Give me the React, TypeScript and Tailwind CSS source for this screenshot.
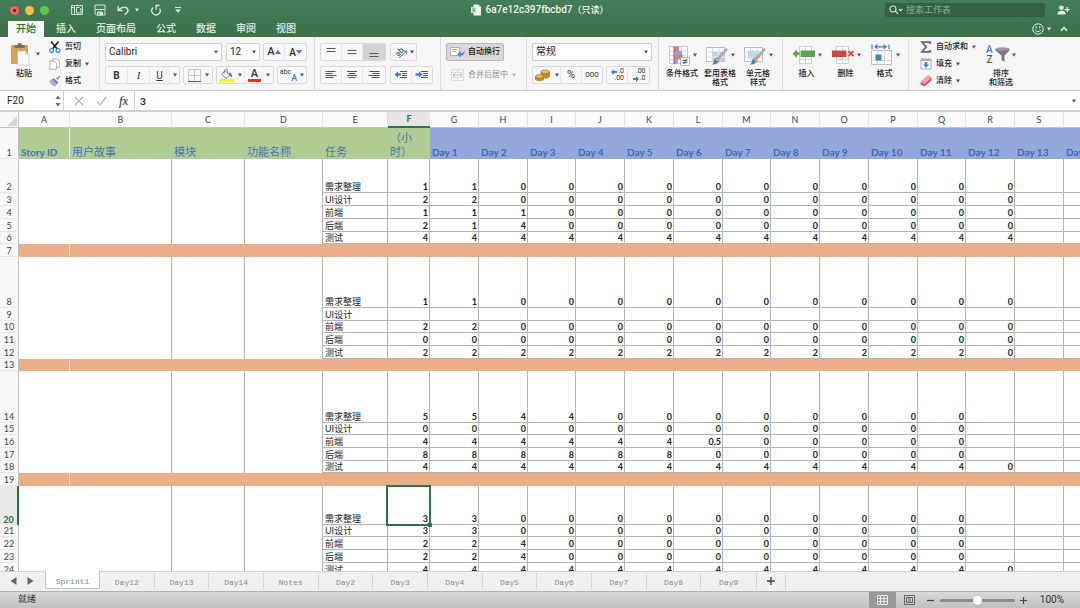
import React from 'react';

const LETTERS = ['A', 'B', 'C', 'D', 'E', 'F', 'G', 'H', 'I', 'J', 'K', 'L', 'M', 'N', 'O', 'P', 'Q', 'R', 'S', 'T'];
const COL_WIDTHS = [51, 102, 73, 78, 65, 42, 49, 49, 48, 49, 49, 49, 48, 49, 49, 49, 48, 49, 49, 49];

const zeros = (n: number) => Array<string>(n).fill('0');
const rep = (v: string, n: number) => Array<string>(n).fill(v);

type Row = { n: number; h: string; band?: boolean; task?: string; values?: string[] };

const ROWS: Row[] = [
  { n: 2, h: 'h-[34px]', task: '需求整理', values: ['1', '1', ...zeros(11)] },
  { n: 3, h: 'h-[13px]', task: 'UI设计', values: ['2', '2', ...zeros(11)] },
  { n: 4, h: 'h-[13px]', task: '前端', values: ['1', '1', '1', ...zeros(10)] },
  { n: 5, h: 'h-[13px]', task: '后端', values: ['2', '1', '4', ...zeros(10)] },
  { n: 6, h: 'h-[12px]', task: '测试', values: rep('4', 13) },
  { n: 7, h: 'h-[13px]', band: true },
  { n: 8, h: 'h-[51px]', task: '需求整理', values: ['1', '1', ...zeros(11)] },
  { n: 9, h: 'h-[13px]', task: 'UI设计', values: [] },
  { n: 10, h: 'h-[12px]', task: '前端', values: ['2', '2', ...zeros(11)] },
  { n: 11, h: 'h-[13px]', task: '后端', values: zeros(13) },
  { n: 12, h: 'h-[13px]', task: '测试', values: [...rep('2', 12), '0'] },
  { n: 13, h: 'h-[12px]', band: true },
  { n: 14, h: 'h-[52px]', task: '需求整理', values: ['5', '5', '4', '4', ...zeros(8)] },
  { n: 15, h: 'h-[12px]', task: 'UI设计', values: zeros(12) },
  { n: 16, h: 'h-[13px]', task: '前端', values: [...rep('4', 6), '0.5', ...zeros(5)] },
  { n: 17, h: 'h-[13px]', task: '后端', values: [...rep('8', 6), ...zeros(6)] },
  { n: 18, h: 'h-[12px]', task: '测试', values: [...rep('4', 12), '0'] },
  { n: 19, h: 'h-[13px]', band: true },
  { n: 20, h: 'h-[39px]', task: '需求整理', values: ['3', '3', ...zeros(10)] },
  { n: 21, h: 'h-[12px]', task: 'UI设计', values: ['3', '3', ...zeros(10)] },
  { n: 22, h: 'h-[13px]', task: '前端', values: ['2', '2', '4', ...zeros(9)] },
  { n: 23, h: 'h-[13px]', task: '后端', values: ['2', '2', '4', ...zeros(9)] },
  { n: 24, h: 'h-[13px]', task: '测试', values: [...rep('4', 12), '0'] },
];

const SHEETS = ['Day12', 'Day13', 'Day14', 'Notes', 'Day2', 'Day3', 'Day4', 'Day5', 'Day6', 'Day7', 'Day8', 'Day9'];

function Caret({ className = 'text-[#555]' }: { className?: string }) {
  return (
    <svg viewBox="0 0 4 4" className={`h-1 w-1 shrink-0 ${className}`} aria-hidden="true">
      <path d="M0 .5h4L2 3.7z" fill="currentColor" />
    </svg>
  );
}

function IconButton({ label, className = '', children }: { label: string; className?: string; children: React.ReactNode }) {
  return (
    <button type="button" aria-label={label} className={`flex h-full items-center justify-center ${className}`}>
      {children}
    </button>
  );
}

function Box({ children }: { children: React.ReactNode }) {
  return (
    <div className="flex h-[18px] items-stretch divide-x divide-[#e6e6e6] overflow-hidden rounded-[2px] border border-[#d9d9d9] bg-[#f8f8f8]">
      {children}
    </div>
  );
}

function Select({ label, value, className }: { label: string; value: string; className: string }) {
  return (
    <div className={`relative h-[18px] ${className}`}>
      <select
        aria-label={label}
        defaultValue={value}
        className="block h-full w-full appearance-none rounded-[2px] border border-[#cfcfcf] bg-white pl-[3px] text-[10px] leading-4 text-[#222]"
      >
        <option>{value}</option>
      </select>
      <span className="pointer-events-none absolute inset-y-0 right-1 flex items-center">
        <Caret />
      </span>
    </div>
  );
}

function Group({ className, children }: { className: string; children: React.ReactNode }) {
  return <div className={`flex shrink-0 flex-col gap-[5px] border-r border-[#dedede] pt-[6px] ${className}`}>{children}</div>;
}

function SmallAction({ icon, text, caret }: { icon: React.ReactNode; text: string; caret?: boolean }) {
  return (
    <button type="button" className="flex h-[17px] items-center gap-1 whitespace-nowrap text-[8px] font-medium text-[#222]">
      {icon}
      <span>{text}</span>
      {caret && <Caret />}
    </button>
  );
}

function BigAction({ icon, lines, className }: { icon: React.ReactNode; lines: string[]; className: string }) {
  return (
    <button type="button" className={`flex flex-col items-center text-[8px] leading-[9px] font-medium text-[#222] ${className}`}>
      <span className="flex h-6 items-center gap-[2px]">
        {icon}
        <Caret />
      </span>
      <span className="mt-[2px] flex flex-col whitespace-nowrap">
        {lines.map((l) => (
          <span key={l}>{l}</span>
        ))}
      </span>
    </button>
  );
}

function Lines({ d, className = 'text-[#555]' }: { d: string; className?: string }) {
  return (
    <svg viewBox="0 0 12 10" className={`h-[10px] w-3 ${className}`} aria-hidden="true">
      <path d={d} stroke="currentColor" strokeWidth="1" fill="none" />
    </svg>
  );
}

function Indent({ flip }: { flip?: boolean }) {
  return (
    <svg viewBox="0 0 14 10" className="h-[10px] w-[14px]" aria-hidden="true">
      <path d="M6 1.5h7M8 3.5h5M8 5.5h5M6 7.5h7" stroke="#555" fill="none" />
      <path d={flip ? 'M7.5 4.5L4 1.2v2H.5v2.6H4v2z' : 'M.5 4.5L4 1.2v2h3v2.6H4v2z'} fill="#3b7fd4" />
    </svg>
  );
}

function Brush() {
  return (
    <g>
      <path d="M22.5 5.5l-7 8.5-2-1.6 7-7.4q1.6-1 2 .5z" fill="#aeb2b8" stroke="#83878e" strokeWidth=".5" />
      <path d="M13.5 12.4l2 1.6-1.3 2-2.6-2z" fill="#d8a248" />
      <path d="M11.8 13.8l2.6 2.3q-.6 4.6-7.9 4.4 2.6-1.1 2.4-3.4.4-2.8 2.9-3.3z" fill="#3f7ecb" />
      <path d="M11.8 13.8l2.6 2.3-1.200 2.200-3.600-3.200z" fill="#e0aa55" />
    </g>
  );
}

function GridBase({ children, wide }: { children: React.ReactNode; wide?: boolean }) {
  return (
    <svg viewBox="0 0 24 22" className="h-[22px] w-6 shrink-0" aria-hidden="true">
      {wide && (
        <>
          <path d="M1.500 3.500h18v14h-18z" fill="#fff" stroke="#b9bec4" />
          <path d="M1.500 8h18M1.500 13h18M7.500 3.500v14M14 3.500v14" stroke="#ccd0d5" strokeWidth=".8" />
        </>
      )}
      {children}
    </svg>
  );
}

function TitleBar() {
  return (
    <header className="shrink-0 bg-linear-to-b from-[#447d57] to-[#3c7149] text-white">
      <div className="flex h-5 items-center">
        <div className="flex flex-1 items-center pl-[10px]">
          <div className="flex gap-[6px]">
            <button type="button" aria-label="关闭" className="flex size-[9px] items-center justify-center rounded-full bg-[#ed6a5e]">
              <span className="size-[3px] rounded-full bg-[#6f1410]" />
            </button>
            <button type="button" aria-label="最小化" className="size-[9px] rounded-full bg-[#f5bf4f]" />
            <button type="button" aria-label="缩放" className="size-[9px] rounded-full bg-[#61c554]" />
          </div>
          <div className="ml-[22px] flex items-center gap-[11px] text-[#d8e6dc]">
            <IconButton label="新建">
              <svg viewBox="0 0 12 12" className="size-3" fill="none" stroke="currentColor">
                <path d="M.6 1.500h10.800v9H.6zM3.500 1.500v9M.6 3.500h3" />
                <path d="M5.500 3.500h3l1.500 1.500v4h-4.500z" />
              </svg>
            </IconButton>
            <IconButton label="保存">
              <svg viewBox="0 0 12 12" className="size-3" fill="none" stroke="currentColor">
                <path d="M1 1h10v10H2.200L1 9.800z" />
                <path d="M1.500 5.500h9" />
                <path d="M3.500 8h5v3h-5z" fill="currentColor" />
                <path d="M5 9v2" stroke="#437a55" />
              </svg>
            </IconButton>
            <div className="flex items-center gap-[6px]">
              <IconButton label="撤消">
                <svg viewBox="0 0 12 12" className="size-3" fill="none" stroke="currentColor" strokeWidth="1.400">
                  <path d="M1.200 2.200v4.300h4.300M1.500 6.200Q4.500 2.800 8 3.200q3 .5 3 3.200 0 1.800-3.500 4.400" />
                </svg>
              </IconButton>
              <Caret className="text-[#d8e6dc]" />
            </div>
            <IconButton label="恢复">
              <svg viewBox="0 0 12 12" className="size-3" fill="none" stroke="currentColor" strokeWidth="1.300">
                <path d="M3.200 3.500A4.200 4.200 0 1 0 9.600 4.500M5.500 1.500h4M6.200 1.500v4" />
              </svg>
            </IconButton>
            <IconButton label="自定义快速访问工具栏">
              <svg viewBox="0 0 10 10" className="size-[10px]" fill="currentColor">
                <path d="M2 2h6v1H2zM2 4.500h6L5 7.800z" />
              </svg>
            </IconButton>
          </div>
        </div>
        <h1 className="flex items-center gap-1 text-[10px] font-medium whitespace-nowrap text-[#eef5f0]">
          <svg viewBox="0 0 10 12" className="h-3 w-[10px]" aria-hidden="true">
            <path d="M2.500.5h5L10 3v8.500H2.500z" fill="#f3f7f4" />
            <path d="M7.500.5V3H10z" fill="#b6cdbd" />
            <path d="M0 3h5.500v6H0z" fill="#d4e4d9" />
            <path d="M1.500 4.300l2.500 3.400M4 4.300L1.500 7.700" stroke="#3f7a53" strokeWidth=".9" />
          </svg>
          <span>
            6a7e12c397fbcbd7<span className="text-[9px]">（只读）</span>
          </span>
        </h1>
        <div className="flex flex-1 items-center justify-end gap-3 pr-[10px]">
          <label className="flex h-[14px] w-40 items-center gap-[3px] rounded-[2px] bg-[#336142] pl-1">
            <svg viewBox="0 0 14 10" className="h-[10px] w-[14px] shrink-0" fill="none" stroke="#d5e3d9" strokeWidth="1.100" aria-hidden="true">
              <circle cx="4" cy="4" r="3" />
              <path d="M6.200 6.200L9 9M10 4l1.700 1.700L13.400 4" />
            </svg>
            <input aria-label="搜索工作表" placeholder="搜索工作表" className="w-full min-w-0 bg-transparent text-[9px] leading-3 outline-none placeholder:text-[#8fae99]" />
          </label>
          <IconButton label="共享">
            <svg viewBox="0 0 13 10" className="h-[10px] w-[13px]" fill="#e3eee6">
              <circle cx="4.500" cy="2.800" r="2.300" />
              <path d="M.3 9.500Q.3 5.700 4.500 5.700T8.700 9.500zM9.600 2h1.200v2h2v1.200h-2v2H9.600v-2h-2V4h2z" />
            </svg>
          </IconButton>
        </div>
      </div>
      <div className="flex h-[17px] items-end justify-between pr-3">
        <nav className="flex h-4 gap-1 pl-2 text-[10px] font-medium">
          <button type="button" className="bg-[#f6f6f6] px-2 leading-4 text-[#2f6b42]">开始</button>
          {['插入', '页面布局', '公式', '数据', '审阅', '视图'].map((t) => (
            <button key={t} type="button" className="px-2 leading-4 text-[#e3eee6]">
              {t}
            </button>
          ))}
        </nav>
        <div className="flex h-[17px] items-center gap-[3px] text-[#e3eee6]">
          <IconButton label="反馈">
            <svg viewBox="0 0 12 12" className="size-3" fill="none" stroke="currentColor">
              <circle cx="6" cy="6" r="5.200" />
              <path d="M3.200 7q2.800 3.600 5.600 0" />
              <path d="M4.300 3.600v1.600M7.700 3.600v1.600" strokeWidth="1.200" />
            </svg>
          </IconButton>
          <Caret className="text-[#e3eee6]" />
          <IconButton label="折叠功能区" className="ml-[6px]">
            <svg viewBox="0 0 8 6" className="h-[6px] w-2" fill="none" stroke="currentColor" strokeWidth="1.500">
              <path d="M1 4.600l3-3 3 3" />
            </svg>
          </IconButton>
        </div>
      </div>
    </header>
  );
}

function Ribbon() {
  return (
    <div className="flex h-[54px] shrink-0 overflow-hidden border-b border-[#c9c9c9] bg-[#f6f6f6] text-[#333]">
      <div className="flex w-[100px] shrink-0 border-r border-[#dedede] pl-[10px]">
        <button type="button" className="flex w-[33px] flex-col items-start pt-[5px] text-[8px] leading-3 font-medium text-[#222]">
          <span className="flex items-center gap-[6px]">
            <svg viewBox="0 0 20 24" className="h-6 w-5 shrink-0" aria-hidden="true">
              <rect x="1" y="3" width="17" height="19" rx="1.500" fill="#d9a05a" />
              <path d="M4.500 6V3.200h2.800a2.300 2.300 0 0 1 4.600 0h2.800V6z" fill="#6d6f73" />
              <path d="M7.500 9h7.500l4 4v10H7.500z" fill="#fff" stroke="#b5b5b5" strokeWidth=".6" />
              <path d="M15 9v4h4z" fill="#dcdcdc" />
            </svg>
            <Caret />
          </span>
          <span className="mt-[2px] ml-[6px]">粘贴</span>
        </button>
        <div className="ml-[6px] flex flex-col pt-[1px]">
          <SmallAction
            text="剪切"
            icon={
              <svg viewBox="0 0 12 12" className="size-3" fill="none" aria-hidden="true">
                <path d="M2 .5L8.300 8M9.500.5L3.500 8" stroke="#222" strokeWidth="1.600" />
                <circle cx="2.600" cy="9.400" r="1.900" stroke="#3b7fd4" strokeWidth="1.200" />
                <circle cx="9" cy="9.400" r="1.900" stroke="#3b7fd4" strokeWidth="1.200" />
              </svg>
            }
          />
          <SmallAction
            text="复制"
            caret
            icon={
              <svg viewBox="0 0 12 12" className="size-3" aria-hidden="true">
                <path d="M3.500.8h4.300l2.700 2.700v5.700h-7z" fill="#fff" stroke="#a5a5a5" strokeWidth=".8" />
                <path d="M.8 3h4.300l2.400 2.500v5.700H.8z" fill="#fff" stroke="#a5a5a5" strokeWidth=".8" />
              </svg>
            }
          />
          <SmallAction
            text="格式"
            icon={
              <svg viewBox="0 0 12 12" className="size-3" aria-hidden="true">
                <path d="M11.500 1.200L8.600 5 7 3.600 10.600.5z" fill="#8b9099" />
                <path d="M4.500 3l5 4.200-2 2L3 4.600z" fill="#6b8fc0" />
                <path d="M3 4.600l4.500 4.600-1.900 2Q2.500 10 .5 6.500z" fill="#a9b2be" stroke="#7f8792" strokeWidth=".5" />
              </svg>
            }
          />
        </div>
      </div>

      <Group className="w-[215px] pl-[5px]">
        <div className="flex">
          <Select label="字体" value="Calibri" className="w-[117px]" />
          <Select label="字号" value="12" className="ml-1 w-[34px]" />
          <div className="ml-[3px]">
            <Box>
              <IconButton label="增大字号" className="w-[21px] text-[11px] font-medium">
                A<svg viewBox="0 0 6 4" className="h-1 w-[6px]"><path d="M0 4h6L3 0z" fill="#4a74c4" /></svg>
              </IconButton>
              <IconButton label="减小字号" className="w-[21px] text-[10px] font-medium">
                A<svg viewBox="0 0 6 4" className="h-1 w-[6px]"><path d="M0 0h6L3 4z" fill="#4a74c4" /></svg>
              </IconButton>
            </Box>
          </div>
        </div>
        <div className="flex gap-[3px]">
          <Box>
            <IconButton label="加粗" className="w-[22px] text-[10px] font-bold">B</IconButton>
            <IconButton label="倾斜" className="w-[22px] font-['Liberation_Serif'] text-[11px] italic">I</IconButton>
            <IconButton label="下划线" className="w-[20px] text-[10px] underline">U</IconButton>
            <IconButton label="下划线选项" className="w-[9px]"><Caret /></IconButton>
          </Box>
          <Box>
            <IconButton label="边框" className="w-[28px] gap-1">
              <svg viewBox="0 0 13 13" className="size-[13px]" fill="none" aria-hidden="true">
                <path d="M.5.500h12v12M.5.500v12M6.500.500v12M.5 6.500h12" stroke="#c8c8c8" />
                <path d="M0 12.500h13" stroke="#555" />
              </svg>
              <Caret />
            </IconButton>
          </Box>
          <Box>
            <IconButton label="填充颜色" className="w-[28px] gap-1">
              <svg viewBox="0 0 15 15" className="size-[15px]" aria-hidden="true">
                <path d="M6 2.500l5 4.500-4 3.500-4-4z" fill="#f2f5f9" stroke="#666" strokeWidth=".8" />
                <path d="M5 5.500Q5 .8 7 .8t1.500 4.500" fill="none" stroke="#777" strokeWidth=".8" />
                <path d="M10 4.500q3.500.5 3 5-1.500-1-3-3z" fill="#3b7fd4" />
                <path d="M0 11h15v3.500H0z" fill="#f8f23c" />
              </svg>
              <Caret />
            </IconButton>
            <IconButton label="字体颜色" className="w-[28px] gap-[5px]">
              <span className="flex flex-col items-center text-[11px] leading-[11px] font-medium">
                A
                <span className="h-[3px] w-[13px] bg-[#e0302a]" />
              </span>
              <Caret />
            </IconButton>
          </Box>
          <Box>
            <IconButton label="拼音指南" className="w-[28px] gap-[3px]">
              <span className="flex h-[15px] items-end">
                <span className="self-start text-[7px] leading-[8px]">abc</span>
                <span className="text-[9px] leading-[9px] font-medium text-[#3b7fd4]">A</span>
              </span>
              <Caret />
            </IconButton>
          </Box>
        </div>
      </Group>

      <Group className="w-[126px] pl-[5px]">
        <div className="flex gap-1">
          <Box>
            <IconButton label="顶端对齐" className="w-[21px]"><Lines d="M1.500 1.500h9M1.500 4.500h9" /></IconButton>
            <IconButton label="垂直居中" className="w-[21px]"><Lines d="M1.500 3.500h9M1.500 6.500h9" /></IconButton>
            <IconButton label="底端对齐" className="w-[22px] bg-[#d3d3d3]"><Lines d="M1.500 6.500h9M1.500 9.500h9" /></IconButton>
          </Box>
          <Box>
            <IconButton label="方向" className="w-[25px] gap-[2px]">
              <svg viewBox="0 0 14 14" className="size-[14px]" aria-hidden="true">
                <text x="1" y="10" fontSize="8" transform="rotate(-45 5 7)" fill="#333">ab</text>
                <path d="M5 13l7.500-7M9.500 6h3.200v3.200" stroke="#3b7fd4" fill="none" />
              </svg>
              <Caret />
            </IconButton>
          </Box>
        </div>
        <div className="flex gap-1">
          <Box>
            <IconButton label="左对齐" className="w-[21px]"><Lines d="M.5 1.500h10M.5 3.500h7M.5 5.500h11M.5 7.500h8" /></IconButton>
            <IconButton label="居中" className="w-[21px]"><Lines d="M1 1.500h10M2.500 3.500h7M1 5.500h10M2.500 7.500h7" /></IconButton>
            <IconButton label="右对齐" className="w-[22px]"><Lines d="M1.500 1.500h10M4.500 3.500h7M.5 5.500h11M3.500 7.500h8" /></IconButton>
          </Box>
          <Box>
            <IconButton label="减少缩进" className="w-[21px]"><Indent /></IconButton>
            <IconButton label="增加缩进" className="w-[20px]"><Indent flip /></IconButton>
          </Box>
        </div>
      </Group>

      <Group className="w-[86px] items-start pl-[5px]">
        <button type="button" className="flex h-[18px] w-[58px] items-center gap-[3px] rounded-[2px] border border-[#b9b9b9] bg-[#d9d9d9] pl-[3px] text-[8px] font-medium whitespace-nowrap text-[#111]">
          <svg viewBox="0 0 15 12" className="h-3 w-[15px] shrink-0" aria-hidden="true">
            <path d="M.5 1.500h9v8h-9z" fill="#fff" stroke="#999" strokeWidth=".7" />
            <path d="M2 3.500h5M2 5.500h4" stroke="#c9a063" />
            <path d="M14 2.500q.8 5-3.200 5V5.200L7.200 8.400l3.600 3.200V9.500Q16 9 14 2.500z" fill="#4a83d8" />
          </svg>
          自动换行
        </button>
        <button type="button" disabled className="flex h-[18px] items-center gap-[4px] pl-[5px] text-[8px] whitespace-nowrap text-[#8f8f8f]">
          <svg viewBox="0 0 13 12" className="h-3 w-[13px] shrink-0" fill="none" stroke="#c5c9d0" aria-hidden="true">
            <path d="M.5.500h12v11H.5zM.5 3.500h12M.5 8.500h12M6.500.500v3M6.500 8.500v3" strokeWidth=".8" strokeDasharray="2 1" />
            <path d="M2 6h9M3.500 4.700L2 6l1.500 1.300M9.500 4.700L11 6 9.500 7.300" stroke="#aab9d4" />
          </svg>
          合并后居中
          <Caret className="text-[#b5b5b5]" />
        </button>
      </Group>

      <Group className="w-[132px] pl-[5px]">
        <Select label="数字格式" value="常规" className="w-[120px]" />
        <div className="flex gap-[3px]">
          <Box>
            <IconButton label="货币" className="w-[28px] gap-[5px]">
              <svg viewBox="0 0 15 13" className="h-[13px] w-[15px]" fill="#d9a13a" stroke="#94671c" strokeWidth=".6" aria-hidden="true">
                <path d="M6 3v5q4.500 2.500 8.500 0V3z" />
                <path d="M6 4.800q4.300 2 8.500 0M6 6.500q4.300 2 8.500 0" fill="none" />
                <ellipse cx="10.200" cy="2.800" rx="4.300" ry="1.900" fill="#efc060" />
                <path d="M.5 7.500v3.300q4 2.300 8 0V7.500z" />
                <path d="M.5 9.200q4 2 8 0" fill="none" />
                <ellipse cx="4.500" cy="7.300" rx="4" ry="1.700" fill="#efc060" />
              </svg>
              <Caret />
            </IconButton>
            <IconButton label="百分比" className="w-[21px] text-[11px]">%</IconButton>
            <IconButton label="千位分隔" className="w-[20px] text-[8px]">000</IconButton>
          </Box>
          <Box>
            {['增加小数位数', '减少小数位数'].map((l, i) => (
              <IconButton key={l} label={l} className="w-[21px]">
                <span className="flex w-[14px] flex-col items-end text-[7px] leading-[7px]">
                  <span className="flex items-center gap-[1px]">
                    {i === 0 && <svg viewBox="0 0 6 6" className="size-[6px]"><path d="M0 3l3-3v2h3v2H3v2z" fill="#3b7fd4" /></svg>}
                    {i === 0 ? '.0' : '.00'}
                  </span>
                  <span className="flex items-center gap-[1px]">
                    {i === 1 && <svg viewBox="0 0 6 6" className="size-[6px]"><path d="M6 3L3 0v2H0v2h3v2z" fill="#3b7fd4" /></svg>}
                    {i === 0 ? '.00' : '.0'}
                  </span>
                </span>
              </IconButton>
            ))}
          </Box>
        </div>
      </Group>

      <div className="flex w-[124px] shrink-0 items-start border-r border-[#dedede] pt-[6px] pl-1">
        <BigAction
          className="w-[38px]"
          lines={['条件格式']}
          icon={
            <GridBase>
              <path d="M2.500 2.500h18v17h-18z" fill="#fff" stroke="#b9bec4" strokeWidth=".8" />
              <path d="M2.500 7h18M2.500 11.500h18M2.500 15.500h18M7.500 2.500v17M14.500 2.500v17" stroke="#ccd0d5" strokeWidth=".8" />
              <path d="M7 2.500h5V7H7zM7 11h9v4H7z" fill="#df7b7b" />
              <path d="M7 7h8v4H7zM7 15h4v4.500H7z" fill="#82a9dc" />
              <path d="M7 2v18" stroke="#c24f58" />
              <path d="M13.500 13.500h9v8h-9z" fill="#fff" stroke="#a5a5a5" strokeWidth=".8" />
              <path d="M15.500 16.400h5M15.500 18.600h5M19.500 15l-3 5" stroke="#222" strokeWidth=".8" />
            </GridBase>
          }
        />
        <BigAction
          className="w-[38px]"
          lines={['套用表格', '格式']}
          icon={
            <GridBase wide>
              <path d="M7.500 8h12v9.500h-12z" fill="#b9d3f2" />
              <path d="M7.500 13h12M14 8v9" stroke="#fff" strokeWidth=".8" />
              <Brush />
            </GridBase>
          }
        />
        <BigAction
          className="w-[38px]"
          lines={['单元格', '样式']}
          icon={
            <GridBase wide>
              <path d="M5 6.500h11.500v8H5z" fill="#bcd6f4" />
              <Brush />
            </GridBase>
          }
        />
      </div>

      <div className="flex w-[126px] shrink-0 items-start border-r border-[#dedede] pt-[6px] pl-1">
        <BigAction
          className="w-[39px]"
          lines={['插入']}
          icon={
            <GridBase>
              <path d="M7.500 2.500h12v17h-12zM7.500 15.500h12M13.500 2.500v17" fill="#fff" stroke="#c3c6ca" strokeWidth=".8" />
              <path d="M8.500 6.500H23v6.500H8.500z" fill="#5fa352" />
              <path d="M.5 9.800l4.500-4.200v2.700h2.500v3H5V14z" fill="#5fa352" />
            </GridBase>
          }
        />
        <BigAction
          className="w-[39px]"
          lines={['删除']}
          icon={
            <GridBase>
              <path d="M5.500 2.500h12v17h-12zM5.500 15.500h12M11.500 2.500v17" fill="#fff" stroke="#c3c6ca" strokeWidth=".8" />
              <path d="M1 6.500h14.500V13H1z" fill="#cc4b47" />
              <path d="M17.500 7.200l5 5M22.500 7.200l-5 5" stroke="#cc4b47" strokeWidth="1.900" />
            </GridBase>
          }
        />
        <BigAction
          className="w-[39px]"
          lines={['格式']}
          icon={
            <GridBase>
              <path d="M1.500 6.500h20v14h-20z" fill="#fff" stroke="#b9bec4" />
              <path d="M1.500 16.500h20M7.500 6.500v14M14.500 6.500v14" stroke="#ccd0d5" strokeWidth=".8" />
              <path d="M5.500 10.500h6v6h-6z" fill="#3f7fc9" />
              <path d="M2 .5v4.500M19 .5v4.500M4.500 2.800h12M7.500.8l-2.500 2 2.500 2M13.500.8l2.500 2-2.500 2" fill="none" stroke="#3f7fc9" strokeWidth="1.200" />
            </GridBase>
          }
        />
      </div>

      <div className="flex shrink-0 pl-[11px]">
        <div className="flex flex-col pt-[1px]">
          <SmallAction
            text="自动求和"
            caret
            icon={
              <svg viewBox="0 0 12 12" className="size-3" fill="none" stroke="#666" strokeWidth="1.700" aria-hidden="true">
                <path d="M10.200 3V1.200H2l4.200 4.700L2 10.800h8.200V9" />
              </svg>
            }
          />
          <SmallAction
            text="填充"
            caret
            icon={
              <svg viewBox="0 0 12 12" className="size-3" aria-hidden="true">
                <path d="M1 1h10v10H1z" fill="#fff" stroke="#9eabbb" />
                <path d="M1 1h10v2H1z" fill="#9eabbb" />
                <path d="M4.800 4h2.400v2.500h2L6 9.800 2.800 6.500h2z" fill="#3b7fd4" />
              </svg>
            }
          />
          <SmallAction
            text="清除"
            caret
            icon={
              <svg viewBox="0 0 12 12" className="size-3" aria-hidden="true">
                <path d="M8 .5L11.500 2.500V5.500L4.500 11.500.5 9.500V7z" fill="#c95a70" />
                <path d="M8 .5L11.500 2.500 4.500 9 .5 7z" fill="#f0a2ae" />
              </svg>
            }
          />
        </div>
        <BigAction
          className="ml-[6px] w-[38px] pt-[6px]"
          lines={['排序', '和筛选']}
          icon={
            <svg viewBox="0 0 24 22" className="h-[22px] w-6 shrink-0" aria-hidden="true">
              <text x="0" y="9" fontSize="10" fill="#3b7fd4" fontWeight="500">A</text>
              <text x="0.500" y="19" fontSize="10" fill="#555" fontWeight="500">Z</text>
              <path d="M9.500 5h14v1.500l-5 5v6.500l-3-2v-4.500l-6-5z" fill="#77797c" />
              <ellipse cx="16.500" cy="5" rx="7" ry="1.700" fill="#97999c" />
            </svg>
          }
        />
      </div>
    </div>
  );
}

function FormulaBar() {
  return (
    <div className="flex h-[19px] shrink-0 items-center bg-white text-[#222]">
      <input aria-label="名称框" defaultValue="F20" className="w-[53px] pl-[7px] text-[10px] leading-4 outline-none" />
      <button type="button" aria-label="名称列表" className="flex h-full w-[11px] items-center justify-center border-r border-[#d0d0d0]">
        <svg viewBox="0 0 6 12" className="h-3 w-[6px]" fill="#666" aria-hidden="true">
          <path d="M.5 4h5L3 .5zM.5 8h5L3 11.500z" />
        </svg>
      </button>
      <div className="flex h-full w-[71px] items-center gap-3 border-r border-[#d0d0d0] pl-[10px]">
        <IconButton label="取消">
          <svg viewBox="0 0 10 10" className="size-[10px]" fill="none" stroke="#b5b5b5" strokeWidth="1.300"><path d="M1 1l8 8M9 1L1 9" /></svg>
        </IconButton>
        <IconButton label="输入">
          <svg viewBox="0 0 11 10" className="h-[10px] w-[11px]" fill="none" stroke="#b5b5b5" strokeWidth="1.300"><path d="M.8 5.500L4 8.700 10.200 1" /></svg>
        </IconButton>
        <IconButton label="插入函数" className="font-['Liberation_Serif'] text-[13px] leading-4 italic">fx</IconButton>
      </div>
      <input aria-label="编辑栏" defaultValue="3" className="min-w-0 flex-1 pl-[5px] font-['Lato'] text-[10px] leading-4 font-bold outline-none" />
      <IconButton label="展开编辑栏" className="w-3">
        <Caret />
      </IconButton>
    </div>
  );
}

function HeaderCell({ i }: { i: number }) {
  const blue = i > 5;
  let content: React.ReactNode = null;
  if (i === 0) content = <span className="font-bold">Story ID</span>;
  else if (i === 1) content = '用户故事';
  else if (i === 2) content = '模块';
  else if (i === 3) content = '功能名称';
  else if (i === 4) content = '任务';
  else if (i === 5)
    content = (
      <>
        <span className="block">（小</span>
        <span className="block">时）</span>
      </>
    );
  else content = <span className="font-bold">{`Day ${i - 5}`}</span>;
  const cjk = i > 0 && i < 6;
  return (
    <td
      className={`h-[31px] overflow-hidden p-0 pl-[2px] align-bottom whitespace-nowrap leading-[14px] ${cjk ? 'text-[11px]' : 'text-[10px]'} ${
        blue ? 'bg-[#92a8d8] text-[#3f68b8]' : 'bg-[#b0cc95] text-[#4b74b0]'
      } ${i === 0 ? 'border-r border-[#e4eedb]' : ''}`}
    >
      {content}
    </td>
  );
}

function Grid() {
  const total = 19 + COL_WIDTHS.reduce((a, b) => a + b, 0);
  return (
    <main className="min-h-0 flex-1 overflow-hidden bg-white">
      <table className="table-fixed border-separate border-spacing-0 font-['Lato','Noto_Sans_CJK_SC',sans-serif] text-[9px] leading-[10px]" style={{ width: total }}>
        <colgroup>
          <col style={{ width: 19 }} />
          {COL_WIDTHS.map((w, i) => (
            <col key={LETTERS[i]} style={{ width: w }} />
          ))}
        </colgroup>
        <thead>
          <tr>
            <th className="h-4 border-r border-b border-[#c4c4c4] bg-[#f8f8f8] p-0 align-bottom">
              <svg viewBox="0 0 11 11" className="ml-auto h-[11px] w-[11px]" aria-hidden="true">
                <path d="M10 0v10H0z" fill="#d6d6d6" />
              </svg>
            </th>
            {LETTERS.map((l) => (
              <th
                key={l}
                scope="col"
                className={`h-4 p-0 ${
                  l === 'F'
                    ? 'border-b-2 border-[#2f7047] bg-[#e6e6e6] font-bold text-[#2f7047]'
                    : 'border-r border-b border-r-[#e3e3e3] border-b-[#c4c4c4] bg-[#f9f9f9] font-normal text-[#444]'
                }`}
              >
                {l}
              </th>
            ))}
          </tr>
        </thead>
        <tbody>
          <tr>
            <th scope="row" className="border-r border-b border-r-[#bdbdbd] border-b-[#e6e6e6] bg-[#f8f8f8] p-0 align-bottom font-normal text-[#444]">
              1
            </th>
            {LETTERS.map((l, i) => (
              <HeaderCell key={l} i={i} />
            ))}
          </tr>
          {ROWS.map((r) => (
            <tr key={r.n}>
              <th
                scope="row"
                className={`${r.h} p-0 align-bottom ${
                  r.n === 20
                    ? 'border-r-2 border-[#2f7047] bg-[#e9e9e9] font-bold text-[#2f7047]'
                    : 'border-r border-b border-r-[#bdbdbd] border-b-[#e6e6e6] bg-[#f8f8f8] font-normal text-[#444]'
                }`}
              >
                {r.n}
              </th>
              {LETTERS.map((l, i) => {
                if (r.band) return <td key={l} className={`bg-[#e9af88] p-0 ${i === 0 ? 'border-r border-[#f6dccb]' : ''}`} />;
                if (i === 0) return <td key={l} className="p-0" />;
                if (i < 4) return <td key={l} className={`p-0 ${i === 1 || i === 2 || i === 3 ? 'border-r border-[#b4b4b4]' : ''}`} />;
                if (i === 4)
                  return (
                    <td key={l} className="border-r border-b border-[#b4b4b4] p-0 pl-[2px] align-bottom whitespace-nowrap text-[#222]">
                      {r.task}
                    </td>
                  );
                const selected = r.n === 20 && l === 'F';
                return (
                  <td key={l} className={`border-r border-b border-[#b4b4b4] p-0 pr-px text-right align-bottom font-bold text-[#222] ${selected ? 'relative' : ''}`}>
                    {r.values?.[i - 5]}
                    {selected && (
                      <span className="absolute -inset-[2px] top-[-1px] border-2 border-[#2f7047]">
                        <span className="absolute -right-[3px] -bottom-[3px] size-1 bg-[#2f7047]" />
                      </span>
                    )}
                  </td>
                );
              })}
            </tr>
          ))}
        </tbody>
      </table>
    </main>
  );
}

function SheetTabs() {
  return (
    <div className="flex h-5 shrink-0 items-start border-t border-[#cfcfcf] bg-[#f0f0f0] font-['Liberation_Mono'] text-[8px] leading-3 text-[#8a8a8a]">
      <div className="flex h-[18px] w-[45px] items-center gap-[10px] pl-[10px]">
        <IconButton label="上一个工作表">
          <svg viewBox="0 0 7 8" className="h-2 w-[7px]" fill="#666"><path d="M6.500 0v8L.5 4z" /></svg>
        </IconButton>
        <IconButton label="下一个工作表">
          <svg viewBox="0 0 7 8" className="h-2 w-[7px]" fill="#666"><path d="M.5 0v8l6-4z" /></svg>
        </IconButton>
      </div>
      <button type="button" className="-mt-px h-[18px] w-[55px] rounded-b-[2px] border-x border-b border-[#c4c4c4] bg-white pt-[4px] text-[#5d9a70]">
        Sprint1
      </button>
      <div className="grid w-[657px] grid-cols-12 divide-x divide-[#d6d6d6] border-r border-[#d6d6d6] pt-[1px]">
        {SHEETS.map((s) => (
          <button key={s} type="button" className="h-4 pt-[3px]">
            {s}
          </button>
        ))}
      </div>
      <button type="button" aria-label="新建工作表" className="mt-[1px] flex h-4 w-[29px] items-center justify-center border-r border-[#d6d6d6]">
        <svg viewBox="0 0 8 8" className="size-2" stroke="#444" strokeWidth="1.400"><path d="M4 0v8M0 4h8" /></svg>
      </button>
    </div>
  );
}

function StatusBar() {
  return (
    <footer className="flex h-[17px] shrink-0 items-center border-t border-[#b2b2b2] bg-linear-to-b from-[#d9d9d9] to-[#c0c0c0] pr-4 text-[9px] text-[#333]">
      <span className="flex-1 pl-[18px]">就绪</span>
      <IconButton label="普通视图" className="w-[27px] bg-[#989898]">
        <svg viewBox="0 0 11 10" className="h-[10px] w-[11px]" fill="none" stroke="#f0f0f0" strokeWidth=".9">
          <path d="M.5.500h10v9H.5zM.5 3.500h10M.5 6.500h10M3.500.500v9M7 .5v9" />
        </svg>
      </IconButton>
      <IconButton label="页面布局视图" className="w-[27px]">
        <svg viewBox="0 0 11 10" className="h-[10px] w-[11px]" fill="none" stroke="#666">
          <path d="M.5.500h10v9H.5zM2.500 2.500h6v5h-6zM4 4h3M4 6h3" />
        </svg>
      </IconButton>
      <IconButton label="缩小" className="ml-1 w-2">
        <svg viewBox="0 0 8 8" className="size-[7px]" stroke="#444" strokeWidth="1.400"><path d="M0 4h8" /></svg>
      </IconButton>
      <input
        type="range"
        aria-label="缩放级别"
        defaultValue={50}
        className="mx-[5px] h-[3px] w-[75px] appearance-none rounded-full bg-[#8c8c8c] [&::-webkit-slider-thumb]:size-[9px] [&::-webkit-slider-thumb]:appearance-none [&::-webkit-slider-thumb]:rounded-full [&::-webkit-slider-thumb]:bg-[#fafafa] [&::-webkit-slider-thumb]:shadow"
      />
      <IconButton label="放大" className="w-2">
        <svg viewBox="0 0 8 8" className="size-[7px]" stroke="#444" strokeWidth="1.400"><path d="M0 4h8M4 0v8" /></svg>
      </IconButton>
      <span className="ml-3 text-[10px] leading-4">100%</span>
    </footer>
  );
}

export default function App() {
  return (
    <div className="flex h-screen flex-col overflow-hidden bg-[#f6f6f6] font-['Roboto','Noto_Sans_CJK_SC',sans-serif]">
      <TitleBar />
      <Ribbon />
      <FormulaBar />
      <div className="h-[2px] shrink-0 bg-[#d0d0d0]" />
      <Grid />
      <SheetTabs />
      <StatusBar />
    </div>
  );
}
